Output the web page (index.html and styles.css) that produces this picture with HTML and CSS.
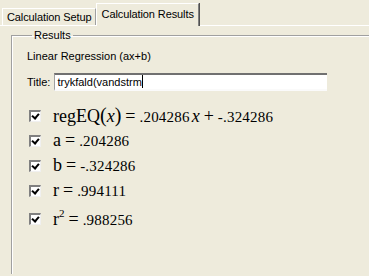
FILE: index.html
```html
<!DOCTYPE html>
<html lang="en">
<head>
  <meta charset="UTF-8">
  <title>Calculation Results</title>
  <link rel="stylesheet" href="styles.css">
</head>
<body>
  <div class="tabs">
    <div class="tab">Calculation Setup</div>
    <div class="tab active">Calculation Results</div>
  </div>
  <div class="panel">
    <fieldset class="group">
      <legend>Results</legend>
      <div class="caption">Linear Regression (ax+b)</div>
      <div class="title-row">
        <label for="title">Title:</label>
        <div class="textbox" id="title">trykfald(vandstrm<span class="caret"></span></div>
      </div>
      <ul class="results">
        <li><span class="check"></span><span class="math">regEQ<span class="paren">(</span><i>x</i><span class="paren">)</span><span class="op">=</span><span class="num">.204286</span><i class="var">x</i><span class="op">+</span><span class="num">-.324286</span></span></li>
        <li><span class="check"></span><span class="math">a<span class="op">=</span><span class="num">.204286</span></span></li>
        <li><span class="check"></span><span class="math">b<span class="op">=</span><span class="num">-.324286</span></span></li>
        <li><span class="check"></span><span class="math">r<span class="op">=</span><span class="num">.994111</span></span></li>
        <li class="tall"><span class="check"></span><span class="math">r<sup>2</sup><span class="op">=</span><span class="num">.988256</span></span></li>
      </ul>
    </fieldset>
  </div>
</body>
</html>
```

FILE: styles.css
```css
body {
  margin: 0;
  background-color: #eeebdc;
  font-family: 'Liberation Sans', Arial, sans-serif;
  font-size: 11px;
  color: #000;
  overflow: hidden;
  height: 276px;
}

.tabs {
  display: flex;
  align-items: flex-end;
  height: 25px;
  padding-left: 2px;
}

.tab {
  height: 16px;
  line-height: 16px;
  padding: 0 3px 0 4px;
  letter-spacing: -0.1px;
  border-top: 1px solid #fff;
  border-left: 1px solid #fff;
  border-right: 1px solid #a0a0a0;
  box-shadow: 1px 0 0 #505050;
}

.tab.active {
  height: 22px;
  line-height: 20px;
  padding: 0 4px 0 5px;
  margin-bottom: -1px;
  border-right: 1px solid #808080;
  position: relative;
  background-color: #eeebdc;
}

.panel {
  border-top: 1px solid #fff;
  padding: 3px 0 0 11px;
}

.group {
  margin: 0;
  padding: 9px 0 40px 15px;
  border: 1px solid #a0a0a0;
  border-right: none;
  border-bottom: none;
  box-shadow: inset 1px 1px 0 #fff;
}

.group legend {
  padding: 0 2px;
  margin-left: 5px;
}

.caption {
  line-height: 13px;
}

.title-row {
  display: flex;
  align-items: center;
  gap: 4px;
  margin-top: 10px;
}

.textbox {
  width: 270px;
  height: 14px;
  line-height: 14px;
  padding: 0 0 0 2px;
  background: #fff;
  border-top: 2px solid #707070;
  border-left: 1px solid #a0a0a0;
  border-bottom: 2px solid #fafafa;
  font-size: 11px;
}

.caret {
  display: inline-block;
  width: 1px;
  height: 13px;
  vertical-align: -2px;
  background: #000;
}

.results {
  list-style: none;
  margin: 12px 0 0 0;
  padding: 0 0 0 2px;
}

.results li {
  display: flex;
  align-items: center;
  height: 25px;
}

.results li.tall {
  height: 31px;
}

.check {
  width: 9px;
  height: 9px;
  margin-right: 12px;
  background: #fff;
  border-top: 2px solid #808080;
  border-left: 2px solid #808080;
  border-right: 1px solid #f0f0f0;
  border-bottom: 1px solid #f0f0f0;
  position: relative;
}

.check::after {
  content: "";
  position: absolute;
  left: 2px;
  top: 0;
  width: 3px;
  height: 5px;
  border-right: 2px solid #000;
  border-bottom: 2px solid #000;
  transform: rotate(40deg);
}

.math {
  font-family: 'Liberation Serif', 'Times New Roman', serif;
  font-size: 18px;
  white-space: nowrap;
}

.math i {
  font-style: italic;
}

.math i.var {
  margin-left: 2px;
}

.paren {
  font-size: 20px;
}

.op {
  margin: 0 4px;
}

.num {
  font-size: 15px;
  letter-spacing: 0.2px;
}

.math sup {
  font-size: 11px;
  vertical-align: 8px;
}
```
